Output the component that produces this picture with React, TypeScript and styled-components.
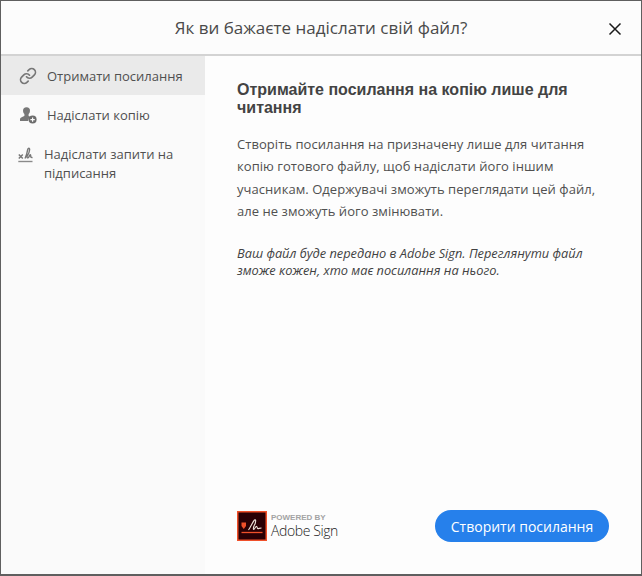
import styled, { createGlobalStyle } from "styled-components";

const GlobalStyle = createGlobalStyle`
  html, body {
    margin: 0;
    padding: 0;
    background: #5f5f5f;
  }
  * {
    box-sizing: border-box;
  }
`;

const Dialog = styled.div`
  width: 642px;
  height: 576px;
  padding: 1px 1px 2px 1px;
  font-family: "Open Sans", "Noto Sans", sans-serif;
  color: #4b4b4b;
`;

const Panel = styled.div`
  height: 100%;
  display: flex;
  flex-direction: column;
  background: #fdfdfd;
`;

const Header = styled.header`
  position: relative;
  flex: none;
  height: 55px;
  display: flex;
  align-items: center;
  justify-content: center;
  border-bottom: 2px solid #d3d3d3;
  background: #fcfcfc;
`;

const Title = styled.h1`
  margin: 0;
  font-size: 17px;
  font-weight: 400;
  color: #4a4a4a;
`;

const CloseButton = styled.button`
  position: absolute;
  right: 19px;
  top: 21px;
  width: 14px;
  height: 14px;
  padding: 0;
  border: 0;
  background: none;
  display: flex;
`;

const Body = styled.div`
  flex: 1;
  display: flex;
  min-height: 0;
`;

const Sidebar = styled.nav`
  flex: none;
  width: 204px;
  background: #fafafa;
`;

const NavItem = styled.div<{ $active?: boolean; $tall?: boolean }>`
  display: flex;
  align-items: ${(p) => (p.$tall ? "flex-start" : "center")};
  min-height: ${(p) => (p.$tall ? "68px" : "39px")};
  padding: ${(p) => (p.$tall ? "11px 16px 0 17px" : "1px 0 0 18px")};
  gap: ${(p) => (p.$tall ? "8px" : "10px")};
  background: ${(p) => (p.$active ? "#eaeaea" : "transparent")};
  font-size: 13px;
  line-height: 19px;
  color: #505050;
`;

const NavIcon = styled.svg<{ $top?: number }>`
  flex: none;
  width: 18px;
  height: 18px;
  margin-top: ${(p) => p.$top ?? 0}px;
  color: #777;
`;

const Main = styled.main`
  flex: 1;
  display: flex;
  flex-direction: column;
  padding: 25px 32px 32px 32px;
`;

const Heading = styled.h2`
  margin: 0 0 16px;
  font-family: "Liberation Sans", Arial, sans-serif;
  font-size: 16px;
  font-weight: 700;
  line-height: 18px;
  color: #434343;
`;

const Paragraph = styled.p`
  margin: 0;
  font-size: 13px;
  line-height: 22.3px;
  letter-spacing: 0.05px;
  color: #505050;
`;

const Note = styled.p`
  margin: 23px 0 0;
  font-size: 12.8px;
  font-style: italic;
  line-height: 17px;
  color: #424242;
`;

const Footer = styled.footer`
  margin-top: auto;
  display: flex;
  align-items: center;
  justify-content: space-between;
`;

const Brand = styled.div`
  display: flex;
  align-items: center;
  gap: 4px;
`;

const BrandText = styled.div`
  display: flex;
  flex-direction: column;
`;

const PoweredBy = styled.span`
  font-family: "Liberation Sans", Arial, sans-serif;
  font-size: 8px;
  font-weight: 700;
  line-height: 9px;
  color: #a3a3a3;
`;

const BrandName = styled.span`
  font-family: "Open Sans", sans-serif;
  font-size: 14px;
  font-weight: 300;
  line-height: 18px;
  letter-spacing: -0.4px;
  color: #222;
`;

const PrimaryButton = styled.button`
  width: 174px;
  height: 32px;
  border: 0;
  border-radius: 16px;
  background: #2680eb;
  color: #fff;
  font-family: "Open Sans", sans-serif;
  font-size: 14px;
  padding: 0;
`;

export default function App() {
  return (
    <>
      <GlobalStyle />
      <Dialog>
        <Panel>
          <Header>
            <Title>Як ви бажаєте надіслати свій файл?</Title>
            <CloseButton aria-label="Закрити">
              <svg width="14" height="14" viewBox="0 0 14 14">
                <path d="M1.5 1.5l11 11M12.5 1.5l-11 11" stroke="#1a1a1a" strokeWidth="1.5" fill="none" />
              </svg>
            </CloseButton>
          </Header>
          <Body>
            <Sidebar>
              <NavItem $active>
                <NavIcon viewBox="0 0 24 24" fill="none" stroke="currentColor" strokeWidth="2.2" strokeLinecap="round">
                  <path d="M10 13a5 5 0 0 0 7.54.54l3-3a5 5 0 0 0-7.07-7.07l-1.72 1.71" />
                  <path d="M14 11a5 5 0 0 0-7.54-.54l-3 3a5 5 0 0 0 7.07 7.07l1.71-1.71" />
                </NavIcon>
                Отримати посилання
              </NavItem>
              <NavItem>
                <NavIcon viewBox="0 0 18 18" fill="currentColor">
                  <circle cx="7.5" cy="4.8" r="3.5" />
                  <path d="M1 15v-2c0-1.4 3-2.2 4.4-3V7h4.2v3c.6.3 1.3.6 1.800.9A5 5 0 0 0 9.200 15z" />
                  <circle cx="13.6" cy="13.6" r="4" fill="#6c6c6c" />
                  <path d="M13.6 11.4v4.400M11.4 13.6h4.400" stroke="#fafafa" strokeWidth="1.2" />
                </NavIcon>
                Надіслати копію
              </NavItem>
              <NavItem $tall>
                <NavIcon viewBox="0 0 18 18" $top={1} fill="none" stroke="currentColor">
                  <path d="M0.8 8.5l4 4M4.8 8.5l-4 4" strokeWidth="1.5" />
                  <path d="M7 12.5c1.400-2.600 2.200-6 2.600-8.600.3-2 2.200-2.300 2-.2-.2 2.300-1.300 4.800-2.400 6.300-.8 1.300.5 2.600 1.400 1.300.6-.9 1-2.100 1.500-2.500.6-.4.6 1.400.7 2.100.1.600 1 .7 1.700.4" strokeWidth="1.4" />
                  <path d="M0.3 15.5h14.200" strokeWidth="1.4" stroke="#8a8a8a" />
                </NavIcon>
                <span>Надіслати запити на підписання</span>
              </NavItem>
            </Sidebar>
            <Main>
              <Heading>Отримайте посилання на копію лише для читання</Heading>
              <Paragraph>
                Створіть посилання на призначену лише для читання копію готового файлу, щоб надіслати його іншим учасникам. Одержувачі зможуть переглядати цей файл, але не зможуть його змінювати.
              </Paragraph>
              <Note>Ваш файл буде передано в Adobe Sign. Переглянути файл зможе кожен, хто має посилання на нього.</Note>
              <Footer>
                <Brand>
                  <svg width="30" height="30" viewBox="0 0 30 30">
                    <rect x="0.75" y="0.75" width="28.5" height="28.5" fill="#2a0005" stroke="#f0502a" strokeWidth="1.5" />
                    <path d="M4.5 11.5H9V15l-2.250 3-2.250-3z" fill="#f0502a" />
                    <path d="M4.5 21.5h21" stroke="#f0502a" strokeWidth="1.3" />
                    <path d="M11.500 19c2.300-2.800 4-8 6-10 1.700-1.200 1.500 2.500-.3 5.500-1 2-1.200 4.500-.2 3.800s1.600-3 2.500-3 .3 2.500 1.500 2.300 2-.6 3.500-.6" fill="none" stroke="#f0e4dc" strokeWidth="1.1" />
                  </svg>
                  <BrandText>
                    <PoweredBy>POWERED BY</PoweredBy>
                    <BrandName>Adobe Sign</BrandName>
                  </BrandText>
                </Brand>
                <PrimaryButton>Створити посилання</PrimaryButton>
              </Footer>
            </Main>
          </Body>
        </Panel>
      </Dialog>
    </>
  );
}
